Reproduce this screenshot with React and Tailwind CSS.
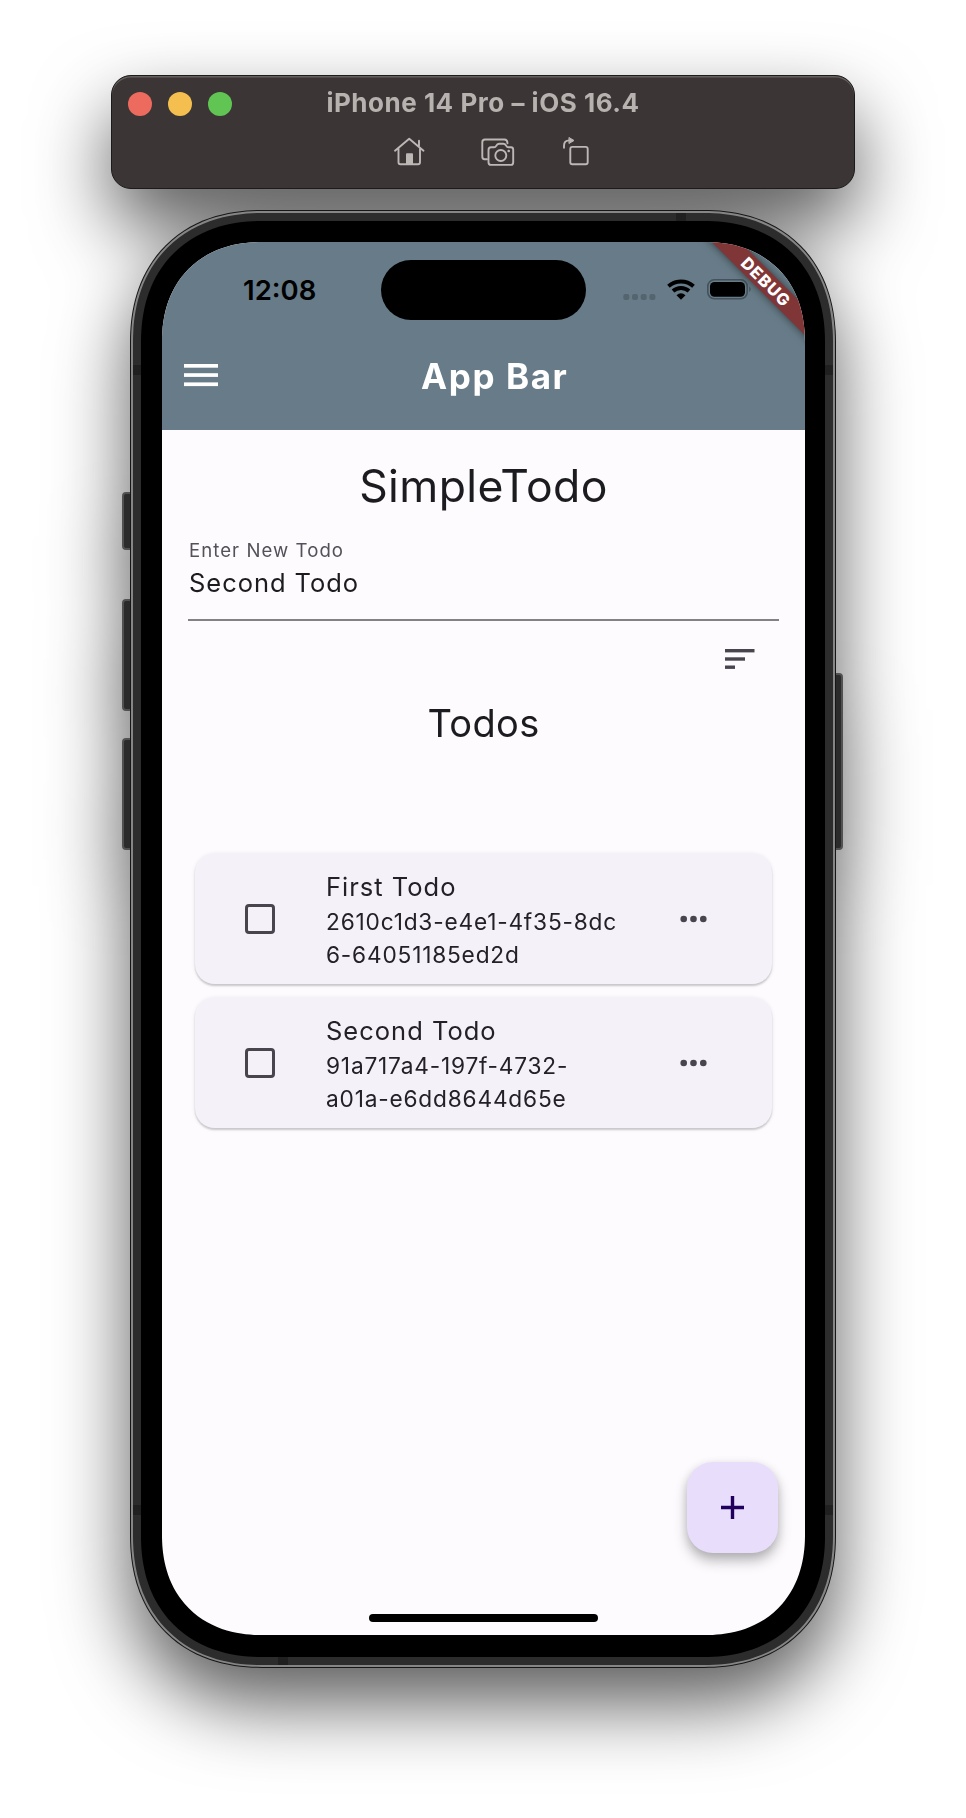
import React from "react";

const todos = [
  { title: "First Todo", lines: ["2610c1d3-e4e1-4f35-8dc", "6-64051185ed2d"] },
  { title: "Second Todo", lines: ["91a717a4-197f-4732-", "a01a-e6dd8644d65e"] },
];

function SimulatorBar() {
  return (
    <div className="w-[744px] h-[114px] rounded-[20px] bg-[#3b3635] border border-[#1c1b1b] shadow-[inset_0_1.5px_0_#65605e] flex flex-col">
      <div className="relative flex items-center justify-center h-[56px]">
        <div className="absolute left-[16px] top-[16px] flex gap-[16px]">
          <span className="size-[24px] rounded-full bg-[#ed6a5f]" />
          <span className="size-[24px] rounded-full bg-[#f5bf4f]" />
          <span className="size-[24px] rounded-full bg-[#61c554]" />
        </div>
        <h1 className="pb-[3px] text-[26px] leading-[32px] font-bold text-[#b7b2b0] tracking-[0.52px] whitespace-nowrap">
          iPhone 14 Pro – iOS 16.4
        </h1>
      </div>
      <div className="flex pl-[280px]">
        <svg width="220" height="40" viewBox="0 0.8 220 40" fill="none" stroke="#bdb8b6" strokeWidth="1.900" strokeLinecap="round" strokeLinejoin="round">
          <path d="M3 19.500 L17.200 7.600 L31.500 19.500 M6.500 17 V31 Q6.500 33 8.500 33 H26 Q28 33 28 31 V17 M27 9.500 V14.500" />
          <path d="M14 33 V23 Q14 22 15 22 H20 Q21 22 21 23 V33 Z" fill="#bdb8b6" stroke="none" />
          <path d="M95 28 H92.500 Q90.300 28 90.300 25.600 V11 Q90.300 8.300 93 8.300 H112.500 Q115.300 8.300 115.500 12" />
          <path d="M99 16 H102 Q103.500 16 104.200 14.600 Q105.200 12.500 107 12.500 H111.500 Q113.300 12.500 114.300 14.600 Q115 16 116.500 16 H119 Q121.200 16 121.200 18.500 V31 Q121.200 33.700 119 33.700 H99 Q96.500 33.700 96.500 31 V18.700 Q96.500 16 99 16 Z" />
          <circle cx="108.800" cy="24.300" r="5.500" />
          <circle cx="116.700" cy="19.800" r="1.300" fill="#bdb8b6" stroke="none" />
          <rect x="178.300" y="15.700" width="17.400" height="17.400" rx="2" />
          <path d="M172 16.500 V14.500 Q172 9.200 177.500 9.200" />
          <path d="M177.300 6.500 L182 9.300 L177.300 12.100 Z" fill="#bdb8b6" strokeWidth="1" />
        </svg>
      </div>
    </div>
  );
}

function DebugBanner() {
  return (
    <div className="absolute left-[514px] top-[29.500px] w-[180px] h-[20px] rotate-45 bg-[#803537] shadow-[0_0_9px_rgba(0,0,0,0.55)] flex items-center justify-center">
      <span className="text-[16.500px] leading-none font-extrabold text-white tracking-[1px]">DEBUG</span>
    </div>
  );
}

function StatusBar() {
  return (
    <div className="flex h-[94px] pl-[81px] pt-[18px]">
      <div className="w-[138px] pt-[14px] text-[27.500px] leading-[32px] font-semibold text-black">12:08</div>
      <div className="w-[205px] h-[60px] rounded-full bg-black" />
      <svg className="ml-[34px] mt-[14px]" width="132" height="32" viewBox="0 0 132 32">
        <g fill="#54656f">
          <rect x="3.300" y="20" width="6" height="6" rx="2" />
          <rect x="12" y="20" width="6" height="6" rx="2" />
          <rect x="20.700" y="20" width="6" height="6" rx="2" />
          <rect x="29.400" y="20" width="6" height="6" rx="2" />
        </g>
        <g fill="none" stroke="#000" strokeWidth="3.900">
          <path d="M48.500 12.300 A18.500 18.500 0 0 1 73.500 12.300" />
          <path d="M53 17 A12 12 0 0 1 69 17" />
        </g>
        <path d="M56.500 21.200 Q61 17.500 65.500 21.200 L61 25.800 Z" />
        <rect x="87.800" y="5.800" width="39.400" height="19" rx="6.500" fill="none" stroke="#43525b" strokeWidth="1.600" />
        <rect x="90" y="8" width="35" height="14.700" rx="4.500" />
        <path d="M129.300 12.300 Q132 15.300 129.300 18.300 Z" fill="#43525b" />
      </svg>
    </div>
  );
}

function AppBar() {
  return (
    <header className="h-[188px] bg-[#677c88]">
      <StatusBar />
      <div className="flex items-center h-[80px] pl-[22px]">
        <svg className="mb-[2px]" width="34" height="23" viewBox="0 0 34 23" fill="#fff">
          <rect y="0" width="34" height="3.700" />
          <rect y="9.200" width="34" height="3.700" />
          <rect y="18.400" width="34" height="3.700" />
        </svg>
        <h2 className="ml-[203px] text-[35px] leading-[40px] font-bold text-white tracking-[1.6px]">App Bar</h2>
      </div>
    </header>
  );
}

function TodoCard({ todo }) {
  return (
    <article className="flex h-[131px] w-[577.500px] rounded-[20px] bg-[#f4f2f8] shadow-[0_2px_2px_rgba(0,0,0,0.16),0_1px_4px_rgba(0,0,0,0.10)]">
      <div className="w-[131.500px] pl-[50.500px] pt-[51px]">
        <div className="size-[30px] rounded-[4px] border-[3.300px] border-[#49454f]" />
      </div>
      <div className="w-[351px] pt-[17px] text-[#232127]">
        <h4 className="mb-px text-[25.500px] leading-[34px] tracking-[1px]">{todo.title}</h4>
        {todo.lines.map((line) => (
          <p key={line} className="text-[22.700px] leading-[33px] tracking-[0.800px] whitespace-nowrap">
            {line}
          </p>
        ))}
      </div>
      <svg className="mt-[60px]" width="32" height="12" viewBox="0 0 32 12" fill="#49454f">
        <circle cx="6.700" cy="6" r="3.300" />
        <circle cx="16.500" cy="6" r="3.300" />
        <circle cx="26.300" cy="6" r="3.300" />
      </svg>
    </article>
  );
}

function Screen() {
  return (
    <main className="relative w-[643px] h-[1393px] overflow-hidden rounded-[100px] [corner-shape:superellipse(1.15)] bg-[#fdfbfe] text-[#1c1b1f]">
      <AppBar />
      <h2 className="mt-[29px] text-center text-[44.500px] leading-[54px] tracking-[0.400px]">SimpleTodo</h2>
      <section className="mx-[26px] h-[108px] pl-px pt-[25px] border-b-2 border-[#838186]">
        <label className="block text-[18.600px] leading-[24px] tracking-[1.050px] text-[#55515a]">Enter New Todo</label>
        <div className="mt-[4px] text-[25.500px] leading-[34px] tracking-[0.950px]">Second Todo</div>
      </section>
      <div className="flex justify-end h-[76px] pt-[28px] pr-[50px]">
        <svg width="30" height="21" viewBox="0 0 30 21" fill="#49454f">
          <rect width="29.500" height="3.400" />
          <rect y="8.300" width="20" height="3.400" />
          <rect y="16.500" width="10" height="3.400" />
        </svg>
      </div>
      <h3 className="mt-[2px] text-center text-[38px] leading-[48px] tracking-[0.350px]">Todos</h3>
      <div className="mt-[106px] ml-[32.500px] flex flex-col gap-[13px]">
        {todos.map((todo) => (
          <TodoCard key={todo.title} todo={todo} />
        ))}
      </div>
      <button className="absolute left-[525.400px] top-[1220px] size-[91px] rounded-[26px] bg-[#e8defb] shadow-[0_8px_13px_rgba(0,0,0,0.26),0_2px_8px_rgba(0,0,0,0.1)] flex items-center justify-center">
        <svg width="23" height="23" viewBox="0 0 23 23" stroke="#21005d" strokeWidth="3.400">
          <path d="M11.500 0 V23 M0 11.500 H23" />
        </svg>
      </button>
      <div className="absolute left-[207px] top-[1371.500px] h-[8px] w-[229px] rounded-full bg-black" />
      <DebugBanner />
    </main>
  );
}

function SideButton({ className }) {
  return <span className={`absolute w-[10px] bg-[#2b2b2b] border-2 border-[#515151] ${className}`} />;
}

function Phone() {
  return (
    <div className="relative">
      <SideButton className="left-[-8px] top-[282px] h-[58px] rounded-l-[4px]" />
      <SideButton className="left-[-8px] top-[389px] h-[112px] rounded-l-[4px]" />
      <SideButton className="left-[-8px] top-[528px] h-[112px] rounded-l-[4px]" />
      <SideButton className="right-[-7px] top-[463px] h-[177px] rounded-r-[4px]" />
      <div className="relative w-[706px] h-[1458px] rounded-[132px] [corner-shape:superellipse(1.15)] bg-[#161616] p-px">
        <div className="h-full rounded-[131px] [corner-shape:superellipse(1.15)] bg-[#858585] p-[2px]">
          <div className="h-full rounded-[129px] [corner-shape:superellipse(1.15)] bg-[#2c2c2c] p-[8px]">
            <div className="h-full rounded-[121px] [corner-shape:superellipse(1.15)] bg-black pl-[21px] pt-[21px]">
              <Screen />
            </div>
          </div>
        </div>
        <span className="absolute left-[546px] top-[3px] h-[8px] w-[10px] bg-[#202020]" />
        <span className="absolute left-[148px] bottom-[3px] h-[8px] w-[10px] bg-[#202020]" />
        <span className="absolute left-[3px] top-[155px] h-[10px] w-[8px] bg-[#202020]" />
        <span className="absolute right-[3px] top-[155px] h-[10px] w-[8px] bg-[#202020]" />
        <span className="absolute left-[3px] top-[1295px] h-[10px] w-[8px] bg-[#202020]" />
        <span className="absolute right-[3px] top-[1295px] h-[10px] w-[8px] bg-[#202020]" />
      </div>
    </div>
  );
}

export default function App() {
  return (
    <div className="flex h-[1818px] w-[966px] flex-col items-center overflow-hidden bg-white pt-[75px] font-['Inter',sans-serif]">
      <div className="flex flex-col items-center gap-[21px] drop-shadow-[0_36px_38px_rgba(0,0,0,0.64)]">
        <SimulatorBar />
        <Phone />
      </div>
    </div>
  );
}
